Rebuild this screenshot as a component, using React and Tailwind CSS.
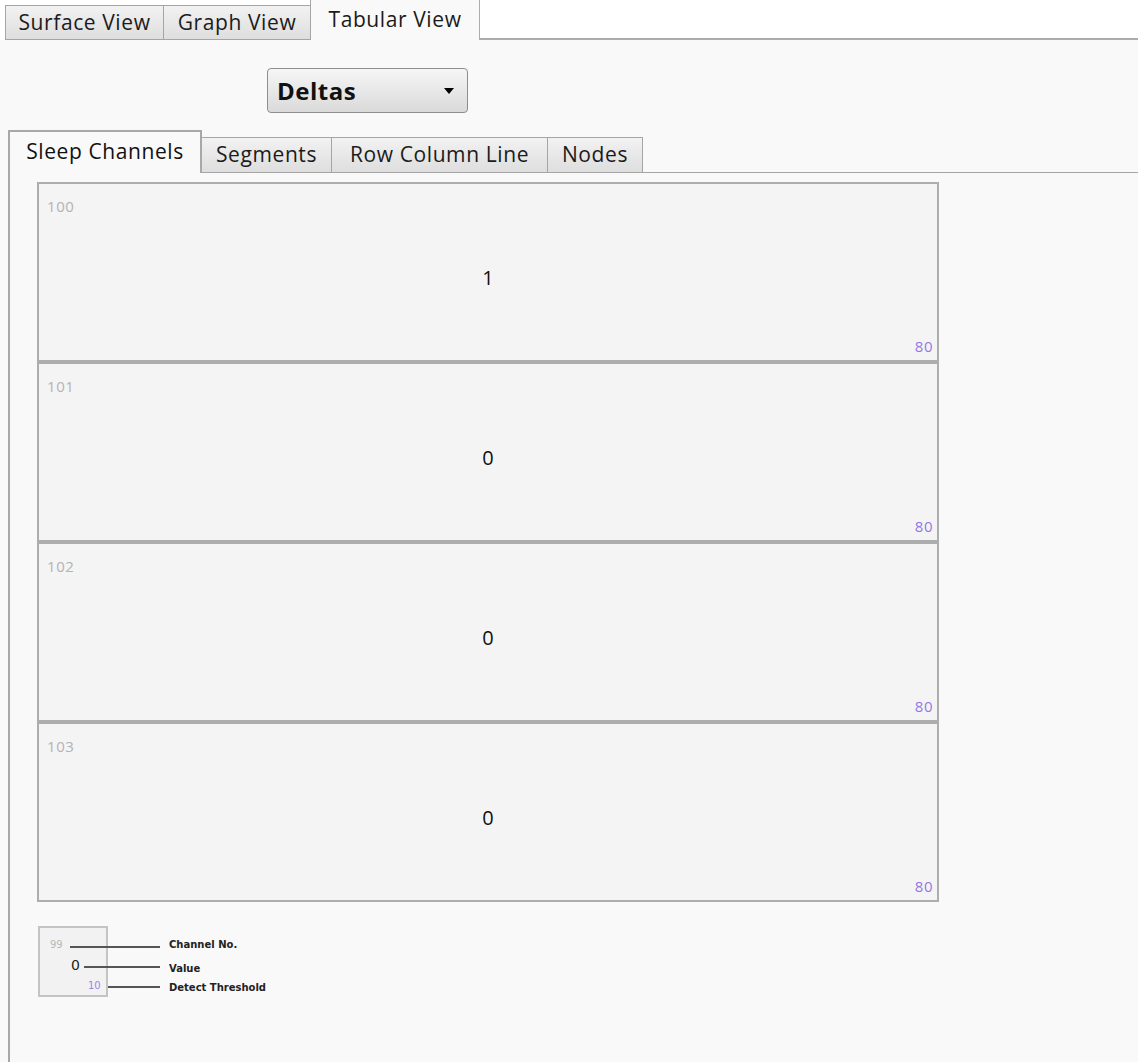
import React from 'react';

const channels = [
    { no: 100, value: 1, threshold: 80 },
    { no: 101, value: 0, threshold: 80 },
    { no: 102, value: 0, threshold: 80 },
    { no: 103, value: 0, threshold: 80 },
];

const TopTab = ({ label, width }) => (
    <div className={`flex h-[35px] items-center justify-center border border-r-0 border-[#a5a5a5] bg-gradient-to-b from-[#f2f2f2] to-[#dedede] text-[21px] tracking-[0.6px] text-[#1b1b1b] ${width}`}>
        {label}
    </div>
);

const ChannelBox = ({ no, value, threshold }) => (
    <div className="flex h-[180px] w-[902px] flex-col border-2 border-[#adadad] bg-[#f4f4f4]">
        <div className="pl-[8px] pt-[15px] text-[15px] leading-none tracking-[0.6px] text-[#b3b3b3]">{no}</div>
        <div className="flex flex-1 items-center justify-center pt-[2px] text-[20px] text-[#111]">{value}</div>
        <div className="self-end pb-[6px] pr-[4px] text-[15px] leading-none tracking-[0.5px] text-[#9478e6]">{threshold}</div>
    </div>
);

export default function App() {
    return (
        <div className="flex h-[1062px] w-full flex-col overflow-hidden bg-[#f9f9f9] font-['Open_Sans',sans-serif]">

            {/* view switcher */}
            <div className="flex h-[40px] shrink-0 items-end bg-white pl-[5px]">
                <TopTab label="Surface View" width="w-[158px]" />
                <TopTab label="Graph View" width="w-[147px]" />
                <div className="flex h-[40px] w-[169px] items-center justify-center border-l border-[#a5a5a5] bg-[#f9f9f9] text-[21px] tracking-[0.6px] text-[#1b1b1b]">
                    Tabular View
                </div>
                <div className="h-full flex-1 border-b-2 border-l border-[#acacac]" />
            </div>

            {/* measurement dropdown */}
            <div className="ml-[267px] mt-[28px] flex h-[45px] w-[201px] items-center justify-between rounded-[4px] border border-[#8e8e8e] bg-gradient-to-b from-[#f6f6f6] to-[#dadada] pl-[9px] pr-[13px]">
                <span className="text-[24px] font-bold tracking-[0.5px] text-[#111]">Deltas</span>
                <span className="h-0 w-0 border-x-[5px] border-t-[6px] border-x-transparent border-t-black" />
            </div>

            {/* channel tabs */}
            <div className="ml-[8px] mt-[17px] flex h-[43px] shrink-0 items-end">
                <div className="flex h-[43px] w-[194px] items-center justify-center border-x-2 border-t-2 border-[#a8a8a8] bg-[#f9f9f9] pb-[2px] text-[21px] tracking-[0.6px] text-[#111]">
                    Sleep Channels
                </div>
                <div className="flex h-[36px] w-[130px] items-center justify-center border border-l-0 border-[#a5a5a5] bg-gradient-to-b from-[#f2f2f2] to-[#dedede] text-[21px] tracking-[0.6px] text-[#1b1b1b]">
                    Segments
                </div>
                <div className="flex h-[36px] w-[216px] items-center justify-center border border-l-0 border-[#a5a5a5] bg-gradient-to-b from-[#f2f2f2] to-[#dedede] text-[21px] tracking-[0.6px] text-[#1b1b1b]">
                    Row Column Line
                </div>
                <div className="flex h-[36px] w-[95px] items-center justify-center border border-l-0 border-[#a5a5a5] bg-gradient-to-b from-[#f2f2f2] to-[#dedede] text-[21px] tracking-[0.6px] text-[#1b1b1b]">
                    Nodes
                </div>
                <div className="h-full flex-1 border-b border-[#a5a5a5]" />
            </div>

            {/* channel panel */}
            <div className="ml-[8px] flex-1 border-l-2 border-[#a8a8a8] pl-[27px] pt-[9px]">
                <div className="flex flex-col">
                    {channels.map((c) => (
                        <ChannelBox key={c.no} {...c} />
                    ))}
                </div>

                {/* legend */}
                <div className="relative ml-[1px] mt-[24px] h-[75px] w-[260px] font-['DejaVu_Sans',sans-serif]">
                    <div className="absolute left-0 top-0 h-[71px] w-[70px] border-2 border-[#c4c4c4] bg-[#f2f2f2]" />
                    <span className="absolute left-[12px] top-[14px] text-[10px] leading-none text-[#b9b9b9]">99</span>
                    <span className="absolute left-[33px] top-[32px] text-[14px] leading-none text-[#222]">0</span>
                    <span className="absolute left-[50px] top-[55px] text-[10px] leading-none text-[#9d86e6]">10</span>
                    <div className="absolute left-[32px] top-[20px] h-[2px] w-[90px] bg-[#555]" />
                    <div className="absolute left-[46px] top-[40px] h-[2px] w-[76px] bg-[#555]" />
                    <div className="absolute left-[70px] top-[60px] h-[2px] w-[52px] bg-[#555]" />
                    <span className="absolute left-[131px] top-[14px] text-[10px] font-bold leading-none text-[#222]">Channel No.</span>
                    <span className="absolute left-[131px] top-[38px] text-[10px] font-bold leading-none text-[#222]">Value</span>
                    <span className="absolute left-[131px] top-[57px] text-[10px] font-bold leading-none text-[#222]">Detect Threshold</span>
                </div>
            </div>

        </div>
    );
}
